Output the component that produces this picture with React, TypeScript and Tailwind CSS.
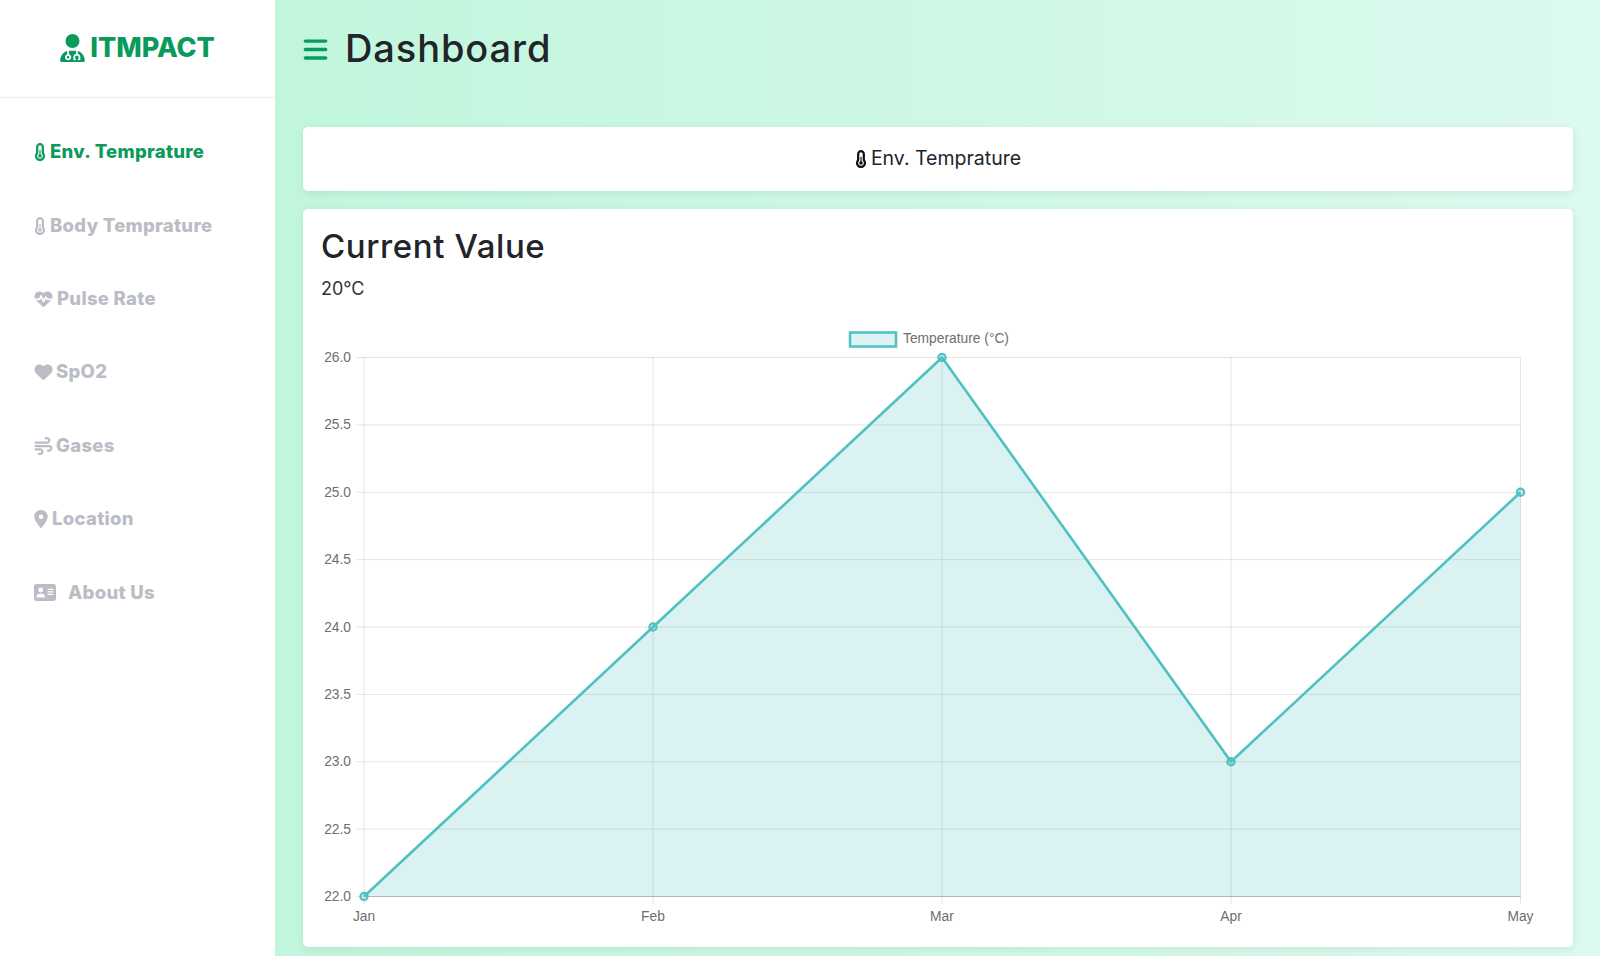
import { FaBars, FaTemperatureHalf, FaHeartPulse, FaHeart, FaWind, FaLocationDot, FaAddressCard, FaUserDoctor } from "react-icons/fa6";

const navItems = [
  { label: "Env. Temprature", icon: FaTemperatureHalf, active: true, iconClass: "text-[18px] w-[12px]", gap: "gap-[4px]" },
  { label: "Body Temprature", icon: FaTemperatureHalf, active: false, iconClass: "text-[18px] w-[12px]", gap: "gap-[4px]" },
  { label: "Pulse Rate", icon: FaHeartPulse, active: false, iconClass: "text-[18px] w-[19px]", gap: "gap-[4px]" },
  { label: "SpO2", icon: FaHeart, active: false, iconClass: "text-[18px] w-[19px]", gap: "gap-[3px]" },
  { label: "Gases", icon: FaWind, active: false, iconClass: "text-[18px] w-[19px]", gap: "gap-[3px]" },
  { label: "Location", icon: FaLocationDot, active: false, iconClass: "text-[18px] w-[14px]", gap: "gap-[4px]" },
  { label: "About Us", icon: FaAddressCard, active: false, iconClass: "text-[21px] w-[22px]", gap: "gap-[12px]" },
];

const yTicks = ["26.0", "25.5", "25.0", "24.5", "24.0", "23.5", "23.0", "22.5", "22.0"];
const xTicks = ["Jan", "Feb", "Mar", "Apr", "May"];
const xPos = [364, 653, 942, 1231, 1520.5];
const yAt = (v: number) => 357.5 + (26 - v) * 134.75;
const values = [22, 24, 26, 23, 25];

function Chart() {
  const pts = values.map((v, i) => `${xPos[i]},${yAt(v)}`).join(" ");
  return (
    <svg viewBox="321 325 1234 610" className="block w-[1234px] h-[610px]">
      {yTicks.map((t, i) => {
        const y = 357.5 + i * 67.375;
        return (
          <g key={t}>
            <line x1={356} x2={1520.5} y1={y} y2={y} stroke="rgba(0,0,0,0.1)" />
            <text x={351} y={y + 4.5} textAnchor="end" fontSize="13.8" fill="#6e6e6e" fontFamily="Liberation Sans, Arial, sans-serif">{t}</text>
          </g>
        );
      })}
      {xTicks.map((t, i) => (
        <g key={t}>
          <line x1={xPos[i]} x2={xPos[i]} y1={357} y2={904} stroke="rgba(0,0,0,0.1)" />
          <text x={xPos[i]} y={921} textAnchor="middle" fontSize="13.8" fill="#6e6e6e" fontFamily="Liberation Sans, Arial, sans-serif">{t}</text>
        </g>
      ))}
      <polygon points={`${pts} 1520.5,896.5 364,896.5`} fill="rgba(75,192,192,0.2)" />
      <line x1={364} x2={1520.5} y1={896.5} y2={896.5} stroke="rgba(0,0,0,0.18)" />
      <polyline points={pts} fill="none" stroke="#4fc1c1" strokeWidth="2.6" />
      {values.map((v, i) => (
        <circle key={i} cx={xPos[i]} cy={yAt(v)} r="3.6" fill="rgba(75,192,192,0.2)" stroke="#4fc1c1" strokeWidth="2.2" />
      ))}
      <rect x="850" y="332.5" width="46" height="14" fill="rgba(75,192,192,0.2)" stroke="#4fc1c1" strokeWidth="2.5" />
      <text x="903" y="343" fontSize="13.8" fill="#6e6e6e" fontFamily="Liberation Sans, Arial, sans-serif">Temperature (°C)</text>
    </svg>
  );
}

export default function App() {
  return (
    <div className="flex h-[956px] overflow-hidden bg-gradient-to-r from-[#bbf5d9] to-[#dcfaee] font-['Inter','Noto_Sans',sans-serif]">
      <aside className="w-[275px] shrink-0 bg-white">
        <div className="h-[98px] border-b border-[#eeeeee] flex items-center justify-center gap-[5px] text-[#0a9a5c] pb-[2px]">
          <FaUserDoctor className="text-[28px] w-[25px]" />
          <span className="text-[27px] font-extrabold leading-none">ITMPACT</span>
        </div>
        <nav className="pt-[17.5px]">
          {navItems.map(item => {
            const Icon = item.icon;
            return (
              <div
                key={item.label}
                className={`h-[73.4px] pl-[34px] flex items-center ${item.gap} text-[18.5px] font-extrabold tracking-[0.3px] ${item.active ? "text-[#0a9a5c]" : "text-[#babdc6]"}`}
              >
                <Icon className={`${item.iconClass} shrink-0`} />
                <span>{item.label}</span>
              </div>
            );
          })}
        </nav>
      </aside>

      <main className="flex-1 pl-[28px] pr-[27px]">
        <header className="h-[127px] flex items-start pt-[26px] gap-[16px]">
          <FaBars className="text-[27px] w-[27px] mt-[10px] -ml-[1px] text-[#0a9a5c]" />
          <h1 className="text-[38px] leading-[45px] font-medium tracking-[0.9px] text-[#212529]">Dashboard</h1>
        </header>

        <div className="h-[64px] rounded-[5px] bg-white shadow-[0_2px_8px_rgba(0,0,0,0.08)] flex items-center justify-center gap-[4px] text-[19.5px] text-[#212529]">
          <FaTemperatureHalf className="text-[18px] w-[12px] text-[#111]" />
          <span>Env. Temprature</span>
        </div>

        <section className="mt-[18px] h-[738px] rounded-[5px] bg-white shadow-[0_2px_8px_rgba(0,0,0,0.08)] px-[18px]">
          <h2 className="pt-[17px] text-[33px] leading-[40px] font-medium tracking-[0.6px] text-[#212529]">Current Value</h2>
          <p className="mt-[10px] text-[18px] leading-[26px] text-[#333] h-[49px]">20°C</p>
          <Chart />
        </section>
      </main>
    </div>
  );
}
